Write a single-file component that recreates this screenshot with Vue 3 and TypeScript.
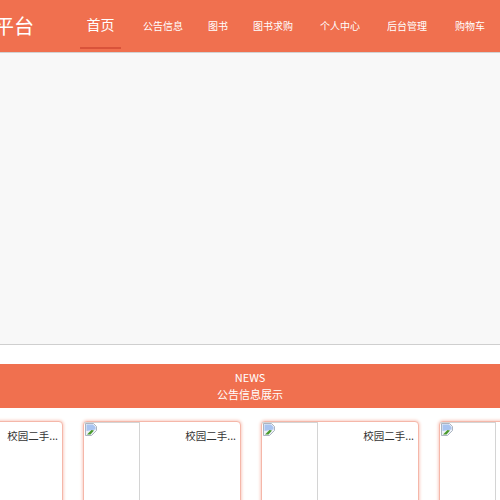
<script setup lang="ts">
const navItems: { label: string; tight: boolean }[] = [
  { label: '公告信息', tight: true },
  { label: '图书', tight: true },
  { label: '图书求购', tight: false },
  { label: '个人中心', tight: false },
  { label: '后台管理', tight: false },
  { label: '购物车', tight: false },
]
const cards = [0, 1, 2, 3]
</script>

<template>
  <div class="page">
    <header class="header">
      <div class="title">平台</div>
      <a class="home">首页</a>
      <nav class="nav">
        <a v-for="n in navItems" :key="n.label" class="item" :class="{ tight: n.tight }">{{ n.label }}</a>
      </nav>
    </header>
    <section class="banner"></section>
    <section class="news">
      <div class="en">NEWS</div>
      <div class="zh">公告信息展示</div>
    </section>
    <section class="cards">
      <article v-for="c in cards" :key="c" class="card">
        <div class="pic">
          <svg class="broken" width="12" height="13" viewBox="0 0 12 13">
            <path d="M.5 .5h8l3 3v4l-5 5h-6z" fill="#eef2f9" stroke="#a4adba" stroke-width=".9" />
            <path d="M1.500 1.500h6.500l2.500 2.500v2.500l-9 1.500z" fill="#a9c4f0" />
            <path d="M2 11.500l4.500-4.500 2.500 .5-3.500 4z" fill="#4a9a2c" />
          </svg>
        </div>
        <div class="text">校园二手...</div>
      </article>
    </section>
  </div>
</template>

<style>
html,
body {
  margin: 0;
  background: #fff;
}
</style>

<style scoped>
.page {
  width: 500px;
  height: 500px;
  overflow: hidden;
  background: #fff;
  font-family: "Noto Sans CJK SC", "Liberation Sans", sans-serif;
}
.header {
  height: 52px;
  background: #f0704f;
  border-bottom: 1px solid #d2d2d2;
  display: flex;
  align-items: flex-start;
  color: #fff;
}
.title {
  width: 40px;
  flex: none;
  margin-left: -6px;
  font-size: 20px;
  line-height: 52px;
  white-space: nowrap;
  direction: rtl;
}
.home {
  flex: none;
  margin-left: 46px;
  width: 41px;
  height: 47px;
  border-bottom: 2px solid #d9533a;
  text-align: center;
  font-size: 14px;
  line-height: 49px;
}
.nav {
  display: flex;
  margin-left: 22px;
  gap: 27px;
}
.item {
  flex: none;
  font-size: 10px;
  line-height: 52px;
  white-space: nowrap;
}
.item.tight {
  margin-right: -2px;
}
.item:last-child {
  margin-left: 1px;
}
.banner {
  height: 291px;
  background: #f8f8f8;
  border-bottom: 1px solid #cfcfcf;
}
.news {
  margin-top: 19px;
  height: 44px;
  background: #f0704f;
  color: #fff;
  text-align: center;
  font-size: 11px;
  line-height: 16px;
  padding-top: 5px;
  box-sizing: border-box;
}
.zh {
  margin-top: 1px;
}
.cards {
  display: flex;
  gap: 20px;
  margin-top: 13px;
  margin-left: -95px;
}
.card {
  flex: none;
  width: 158px;
  height: 100px;
  box-sizing: border-box;
  display: flex;
  background: #fff;
  border-radius: 4px;
  border: 1px solid #f5b7a9;
  box-shadow: 0 0 3px 1px #f9d0c6;
}
.pic {
  width: 55px;
  flex: none;
  border-right: 1px solid #d4d4d4;
  border-top: 1px solid #d4d4d4;
}
.broken {
  display: block;
  margin-left: 1px;
}
.text {
  flex: 1;
  text-align: right;
  padding: 6px 4px 0 0;
  font-size: 10.500px;
  line-height: 16px;
  color: #333;
}
</style>
